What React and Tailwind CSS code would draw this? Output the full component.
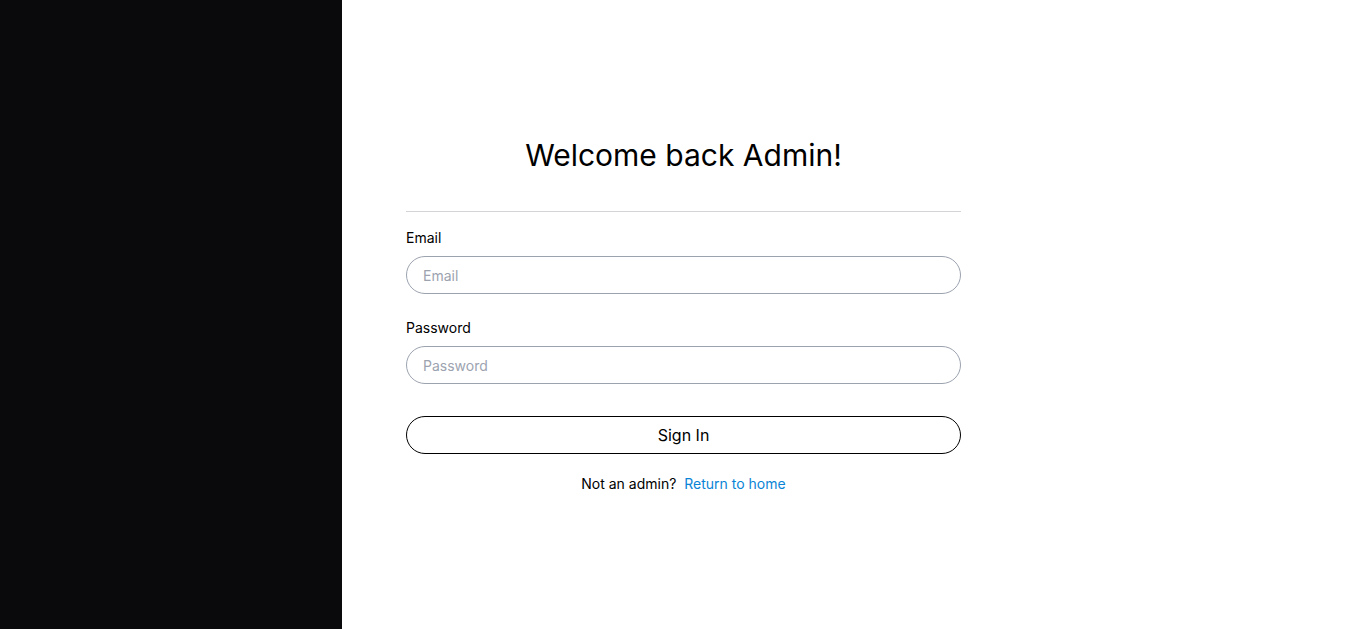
export default function App() {
  return (
    <div
      className="flex h-screen w-full bg-white"
      style={{ fontFamily: 'Inter, "Noto Sans", sans-serif' }}
    >
      <div className="h-full w-[342px] shrink-0 bg-[#0a0a0c]" />

      <div className="flex flex-1 items-center pl-16 pt-[2px]">
        <div className="w-[555px]">
          <h1 className="text-center text-[30px] leading-9 text-black">Welcome back Admin!</h1>

          <div className="mt-[38px] border-t border-[#d4d4d8]" />

          <form className="mt-4" onSubmit={(e) => e.preventDefault()}>
            <label className="block text-sm leading-5 text-black">Email</label>
            <input
              type="email"
              placeholder="Email"
              className="mt-2 block h-[38px] w-full rounded-full border border-[#9ca3af] px-4 text-sm text-black placeholder:text-[#9ca3af] focus:outline-none"
            />

            <label className="mt-6 block text-sm leading-5 text-black">Password</label>
            <input
              type="password"
              placeholder="Password"
              className="mt-2 block h-[38px] w-full rounded-full border border-[#9ca3af] px-4 text-sm text-black placeholder:text-[#9ca3af] focus:outline-none"
            />

            <button
              type="submit"
              className="mt-8 block h-[38px] w-full rounded-full border border-black bg-white text-base text-black"
            >
              Sign In
            </button>
          </form>

          <p className="mt-5 text-center text-sm leading-5 text-black">
            Not an admin?{' '}
            <a href="#" className="ml-1 text-[#0a84d6]">
              Return to home
            </a>
          </p>
        </div>
      </div>
    </div>
  );
}
